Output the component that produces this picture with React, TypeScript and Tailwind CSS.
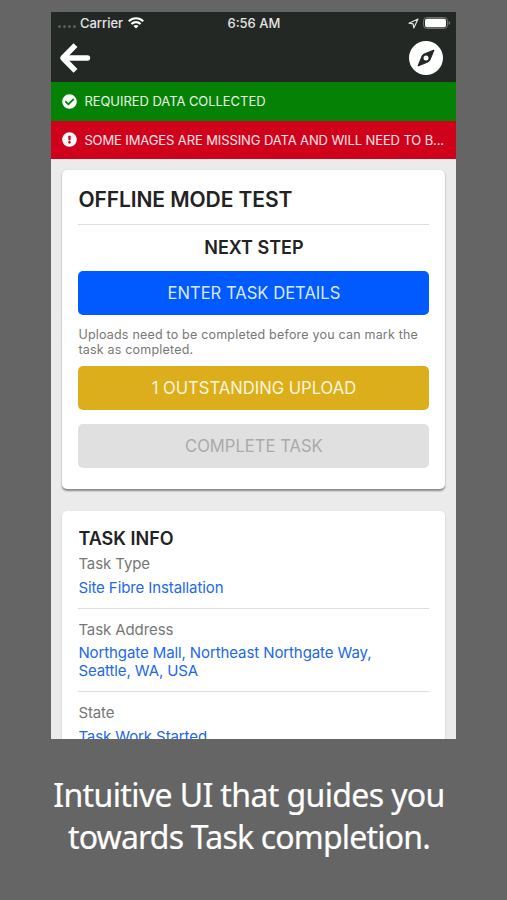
import type { ReactNode } from "react";
import { FaCheckCircle, FaExclamationCircle } from "react-icons/fa";

function StatusBar() {
  return (
    <div className="grid h-[22px] grid-cols-3 items-center text-[13px] leading-[22px] font-medium text-[#e4e6e4]">
      <div className="flex items-center pl-[7px]">
        <div className="flex w-[21.5px] gap-[2px] pt-[7px]">
          <i className="size-[3px] rounded-full bg-[#5b5e5b]" />
          <i className="size-[3px] rounded-full bg-[#5b5e5b]" />
          <i className="size-[3px] rounded-full bg-[#5b5e5b]" />
          <i className="size-[3px] rounded-full bg-[#5b5e5b]" />
        </div>
        <span>Carrier</span>
        <svg className="ml-[5px] h-3 w-4" viewBox="0 0 16 12" fill="none" stroke="#fff" strokeWidth="2.1">
          <path d="M.8 4.2a10.3 10.3 0 0 1 14.4 0" />
          <path d="M3.4 7a6.6 6.6 0 0 1 9.2 0" />
          <path d="M8 11.6 5.5 9.1a3.6 3.6 0 0 1 5 0Z" fill="#fff" stroke="none" />
        </svg>
      </div>
      <div className="text-center">6:56 AM</div>
      <div className="flex items-center justify-end pr-[5px]">
        <svg className="mr-1 h-[11px] w-[11px]" viewBox="0 0 11 11" fill="none" stroke="#dfe1df" strokeWidth="1.2" strokeLinejoin="round">
          <path d="M10 1 1 5.2l4.1.7.7 4.1Z" />
        </svg>
        <svg className="h-3 w-[28px]" viewBox="0 0 28 12">
          <rect x=".6" y=".6" width="23.8" height="10.8" rx="3" fill="none" stroke="#777a77" />
          <rect x="2" y="1.7" width="21" height="8.6" rx="1.8" fill="#fff" />
          <path d="M25.6 4v4q1.6-.6 1.6-2t-1.6-2Z" fill="#777a77" />
        </svg>
      </div>
    </div>
  );
}

function BackArrow() {
  return (
    <svg className="h-[32px] w-[32px]" viewBox="0 0 32 32" fill="none" stroke="#fff" strokeWidth="5.4" strokeLinejoin="round">
      <path d="M16.5 3.2 3.9 16l12.6 12.8" strokeLinecap="butt" />
      <path d="M4.5 16h24" strokeLinecap="round" />
    </svg>
  );
}

function Compass() {
  return (
    <svg className="size-[34px]" viewBox="0 0 34 34">
      <circle cx="17" cy="17" r="17" fill="#fff" />
      <path d="M25 9 21 18.9Q20.4 20.4 18.9 21L9 25l4-9.9Q13.6 13.6 15.1 13Z" fill="#232825" stroke="#232825" strokeWidth="1" strokeLinejoin="round" />
      <circle cx="17" cy="17" r="2.5" fill="#fff" />
    </svg>
  );
}

function Banner({ color, icon, children }: { color: string; icon: ReactNode; children: ReactNode }) {
  return (
    <div className={`flex h-[38.5px] items-center pl-[10.5px] text-[13px] text-white/90 ${color}`}>
      <span className="mr-[7.5px] shrink-0 text-[15px] text-white">{icon}</span>
      <span className="pt-px whitespace-nowrap">{children}</span>
    </div>
  );
}

function Action({ className, children }: { className: string; children: ReactNode }) {
  return (
    <button className={`block h-[43.5px] w-full rounded-[5px] pt-px text-[16.6px] ${className}`}>
      {children}
    </button>
  );
}

export default function App() {
  return (
    <div className="h-[900px] w-[507px] overflow-hidden bg-[#656565] pt-3 font-['Inter','Liberation_Sans',sans-serif]">
      <main className="ml-[51.4px] h-[727px] w-[405px] overflow-hidden bg-[#ebebeb]">
        <header className="h-[70px] bg-[#232825]">
          <StatusBar />
          <div className="flex h-12 items-center justify-between pr-[13px] pl-2">
            <BackArrow />
            <Compass />
          </div>
        </header>
        <Banner color="bg-[#058205]" icon={<FaCheckCircle />}>
          <span className="tracking-[-0.05px]">REQUIRED DATA COLLECTED</span>
        </Banner>
        <Banner color="bg-[#d0021b]" icon={<FaExclamationCircle />}>
          <span className="tracking-[-0.11px]">SOME IMAGES ARE MISSING DATA AND WILL NEED TO B...</span>
        </Banner>

        <section className="mx-[11px] mt-[11px] h-[319px] rounded-[5px] bg-white px-4 pt-[14px] shadow-[0_1.5px_2px_#888]">
          <h1 className="h-[41px] border-b border-[#dedede] text-[21px] leading-8 font-semibold tracking-[-0.08px] text-[#222]">OFFLINE MODE TEST</h1>
          <h2 className="h-[46px] pt-px text-center text-[18px] leading-[44px] font-semibold text-[#222]">NEXT STEP</h2>
          <Action className="bg-[#005aff] text-[#dce9ff]">ENTER TASK DETAILS</Action>
          <p className="h-[51.5px] pt-[12px] text-[12.5px] leading-[15px] tracking-[0.2px] whitespace-nowrap text-[#777]">
            Uploads need to be completed before you can mark the
            <br />
            task as completed.
          </p>
          <Action className="bg-[#ddae1b] text-[#fff7df]">1 OUTSTANDING UPLOAD</Action>
          <Action className="mt-[14.5px] bg-[#e0e0e0] text-[#aaa]">COMPLETE TASK</Action>
        </section>

        <section className="mx-[11px] mt-[22px] h-[319px] rounded-[5px] bg-white px-4 pt-[16px] text-[15px] tracking-[-0.1px] shadow-[0_1px_2px_#bbb]">
          <h2 className="text-[18px] leading-6 font-semibold tracking-normal text-[#222]">TASK INFO</h2>
          <div className="h-[58px] border-b border-[#dedede]">
            <p className="leading-[26px] text-[#777]">Task Type</p>
            <p className="leading-[22px] text-[#2268e8]">Site Fibre Installation</p>
          </div>
          <div className="h-[83px] border-b border-[#dedede] pt-2">
            <p className="leading-[26px] text-[#777]">Task Address</p>
            <p className="pt-px leading-[18px] text-[#2268e8]">
              Northgate Mall, Northeast Northgate Way,
              <br />
              Seattle, WA, USA
            </p>
          </div>
          <div className="pt-2">
            <p className="leading-[26px] text-[#777]">State</p>
            <p className="leading-[22px] text-[#2268e8]">Task Work Started</p>
          </div>
        </section>
      </main>
      <p className="mt-[35px] pr-[9px] text-center font-['Noto_Sans','Open_Sans',sans-serif] text-[32px] leading-[42px] text-white [-webkit-text-stroke:0.2px_white]">
        <span className="tracking-[-0.62px]">Intuitive UI that guides you</span>
        <br />
        <span className="tracking-[-0.8px]">towards Task completion.</span>
      </p>
    </div>
  );
}
